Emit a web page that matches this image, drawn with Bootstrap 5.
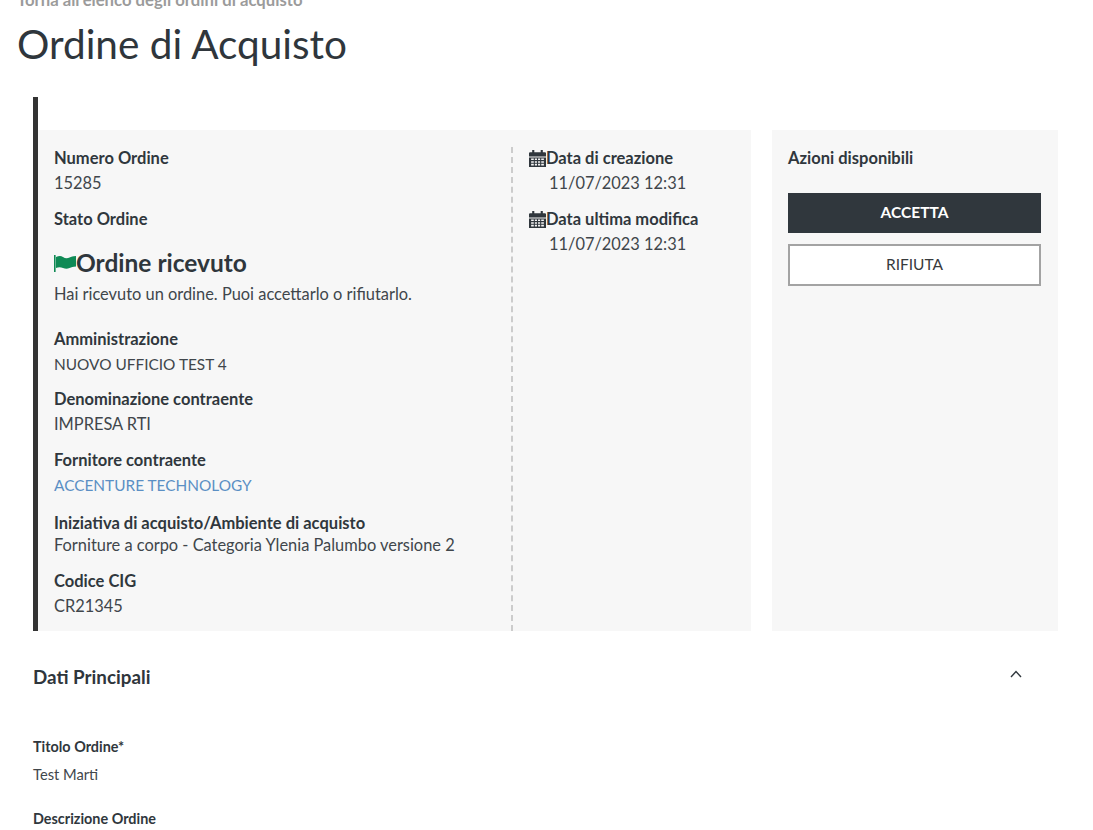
<!DOCTYPE html>
<html lang="it">
<head>
<meta charset="UTF-8">
<meta name="viewport" content="width=device-width, initial-scale=1">
<title>Ordine di Acquisto</title>
<link href="https://cdn.jsdelivr.net/npm/bootstrap@5.3.2/dist/css/bootstrap.min.css" rel="stylesheet">
<style>
  html, body {
    overflow: hidden;
    height: 830px;
  }
  body {
    background: #fff;
    color: #40464b;
    font-family: Lato, "Liberation Sans", sans-serif;
    font-size: 16px;
  }
  .page-wrap {
    margin-top: -12px;
    padding-left: 17px;
    padding-right: 35px;
  }
  .back-link {
    color: #9b9b9b;
    font-weight: 700;
    font-size: 16.7px;
    line-height: 24px;
    text-decoration: none;
    display: block;
  }
  .page-title {
    font-size: 40.5px;
    font-weight: 400;
    line-height: 52px;
    color: #2f363c;
    margin: 6px 0 27px;
  }
  .order-box {
    margin-left: 16px;
    border-left: 5px solid #333;
    padding-top: 33px;
    height: 534px;
  }
  .panel-main {
    width: 713px;
    background: #f7f7f7;
    padding: 16px 16px 0;
  }
  .panel-side {
    width: 286px;
    margin-left: 21px;
    background: #f7f7f7;
    padding: 16px 17px 17px 16px;
  }
  .info-col {
    width: 457px;
  }
  .date-col {
    border-left: 2px dashed #ccc;
    padding-left: 16px;
    margin-top: 1px;
  }
  .lbl {
    font-weight: 700;
    font-size: 16.5px;
    line-height: 25px;
    color: #30373d;
  }
  .val {
    font-size: 16.4px;
    line-height: 24px;
    margin-bottom: 11.5px;
  }
  .val-caps {
    font-size: 15.4px;
  }
  .val-link {
    margin-bottom: 14px;
  }
  .val-tight {
    margin-top: -2.5px;
  }
  .val-date {
    padding-left: 20px;
  }
  .date-first {
    margin-top: -1px;
  }
  .status-title {
    font-size: 24.5px;
    font-weight: 700;
    line-height: 30px;
    color: #2f363c;
    margin-top: 16px;
    margin-bottom: 4px;
  }
  .status-text {
    font-size: 16.4px;
    line-height: 24px;
    margin-bottom: 21px;
  }
  .supplier-link {
    color: #5b8fc4;
    text-decoration: none;
  }
  .btn-accept, .btn-refuse {
    font-size: 15.5px;
    border-radius: 0;
    width: 100%;
    display: block;
  }
  .btn-accept {
    background: #30373d;
    border: 0;
    color: #fff;
    font-weight: 700;
    height: 40px;
    margin-top: 22px;
  }
  .btn-refuse {
    background: #fff;
    border: 2px solid #a3a3a3;
    color: #373a3c;
    height: 42px;
    margin-top: 11px;
  }
  .section-head {
    margin: 30px 0 0 16px;
    width: 1019px;
    padding-right: 30px;
  }
  .section-title {
    font-size: 18.8px;
    font-weight: 700;
    line-height: 32px;
    color: #2f363c;
    margin: 0;
  }
  .section-chevron {
    margin-bottom: 6px;
  }
  .fields {
    margin: 44px 0 0 16px;
  }
  .field-lbl {
    font-size: 14.4px;
    font-weight: 700;
    line-height: 20px;
    color: #30373d;
  }
  .field-val {
    font-size: 14.7px;
    line-height: 20px;
    margin-top: 7px;
    margin-bottom: 25px;
  }
</style>
</head>
<body>

<div class="page-wrap">
  <a class="back-link" href="#">Torna all'elenco degli ordini di acquisto</a>
  <h1 class="page-title">Ordine di Acquisto</h1>

  <div class="order-box d-flex">
    <div class="panel-main d-flex">
      <div class="info-col">
        <div class="lbl">Numero Ordine</div>
        <div class="val">15285</div>
        <div class="lbl">Stato Ordine</div>
        <div class="status-title d-flex align-items-center">
          <!-- bandiera stato -->
          <svg width="22" height="18" viewBox="0 0 22 18" fill="#0f8a55" class="flex-shrink-0">
            <rect x="0" y="1" width="1.6" height="17"/>
            <path d="M2 3c3-1.500 5-1.500 7 0s4.500 1.500 6.500 .5 3-1 6.500-1.500v10.500c-3 .5-4.500 .5-6.500 1.500s-4 1-6.500 0-4.500-1-7 0z"/>
          </svg>
          <span>Ordine ricevuto</span>
        </div>
        <div class="status-text">Hai ricevuto un ordine. Puoi accettarlo o rifiutarlo.</div>
        <div class="lbl">Amministrazione</div>
        <div class="val val-caps">NUOVO UFFICIO TEST 4</div>
        <div class="lbl">Denominazione contraente</div>
        <div class="val">IMPRESA RTI</div>
        <div class="lbl">Fornitore contraente</div>
        <div class="val val-caps val-link"><a class="supplier-link" href="#">ACCENTURE TECHNOLOGY</a></div>
        <div class="lbl">Iniziativa di acquisto/Ambiente di acquisto</div>
        <div class="val val-tight">Forniture a corpo - Categoria Ylenia Palumbo versione 2</div>
        <div class="lbl">Codice CIG</div>
        <div class="val mb-0">CR21345</div>
      </div>
      <div class="date-col flex-grow-1">
        <div class="lbl date-first d-flex align-items-center">
          <svg width="17" height="17" viewBox="0 0 16 16" class="flex-shrink-0" fill="#30373d">
            <path d="M3 0h2v2h6V0h2v2h2a1 1 0 0 1 1 1v3H0V3a1 1 0 0 1 1-1h2z"/>
            <path fill-rule="evenodd" d="M0 7h16v9H0zm2 1v1.500h2.500V8zm3.500 0v1.500h2V8zm3 0v1.500h2V8zm3 0v1.500H14V8zM2 10.500V12h2.500v-1.500zm3.500 0V12h2v-1.500zm3 0V12h2v-1.500zm3 0V12H14v-1.500zM2 13v1.500h2.500V13zm3.500 0v1.500h2V13zm3 0v1.500h2V13zm3 0v1.500H14V13z"/>
          </svg>
          <span>Data di creazione</span>
        </div>
        <div class="val val-date">11/07/2023 12:31</div>
        <div class="lbl d-flex align-items-center">
          <svg width="17" height="17" viewBox="0 0 16 16" class="flex-shrink-0" fill="#30373d">
            <path d="M3 0h2v2h6V0h2v2h2a1 1 0 0 1 1 1v3H0V3a1 1 0 0 1 1-1h2z"/>
            <path fill-rule="evenodd" d="M0 7h16v9H0zm2 1v1.500h2.500V8zm3.500 0v1.500h2V8zm3 0v1.500h2V8zm3 0v1.500H14V8zM2 10.500V12h2.500v-1.500zm3.500 0V12h2v-1.500zm3 0V12h2v-1.500zm3 0V12H14v-1.500zM2 13v1.500h2.500V13zm3.500 0v1.500h2V13zm3 0v1.500h2V13zm3 0v1.500H14V13z"/>
          </svg>
          <span>Data ultima modifica</span>
        </div>
        <div class="val val-date">11/07/2023 12:31</div>
      </div>
    </div>
    <div class="panel-side">
      <div class="lbl">Azioni disponibili</div>
      <button type="button" class="btn btn-accept p-0">ACCETTA</button>
      <button type="button" class="btn btn-refuse p-0">RIFIUTA</button>
    </div>
  </div>

  <div class="section-head d-flex justify-content-between align-items-center">
    <h2 class="section-title">Dati Principali</h2>
    <svg class="section-chevron" width="12" height="8" viewBox="0 0 12 8" fill="none" stroke="#30373d" stroke-width="1.400">
      <path d="M1 7l5-5.500L11 7"/>
    </svg>
  </div>

  <div class="fields">
    <div class="field-lbl">Titolo Ordine*</div>
    <div class="field-val">Test Marti</div>
    <div class="field-lbl">Descrizione Ordine</div>
  </div>
</div>

<script src="https://cdn.jsdelivr.net/npm/bootstrap@5.3.2/dist/js/bootstrap.bundle.min.js"></script>
</body>
</html>
